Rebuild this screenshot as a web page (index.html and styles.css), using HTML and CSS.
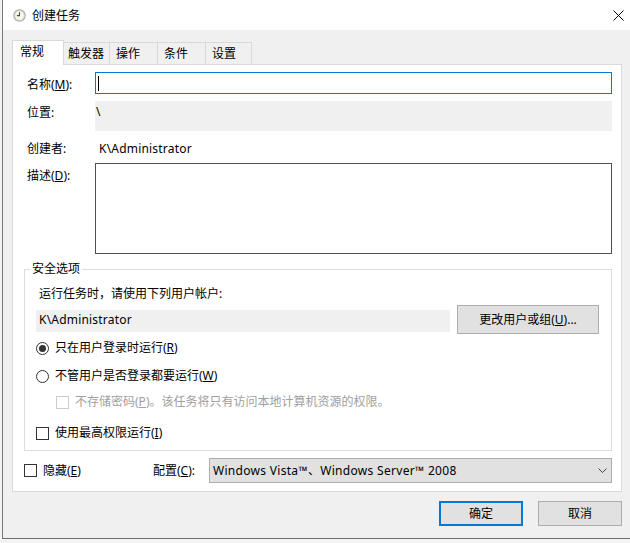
FILE: index.html
```html
<!DOCTYPE html>
<html lang="zh-CN">
<head>
<meta charset="utf-8">
<title>创建任务</title>
<link rel="stylesheet" href="styles.css">
</head>
<body>
<div class="screen">
  <div class="window">
    <div class="titlebar">
      <svg class="app-icon" width="13" height="13" viewBox="0 0 13 13">
        <circle cx="6.5" cy="6.5" r="6.2" fill="#a9a9a9"/>
        <circle cx="6.5" cy="6.5" r="5.2" fill="#d9d9d9"/>
        <circle cx="6.5" cy="6.5" r="4.3" fill="#fbf6e6"/>
        <path d="M6.5 3.3V6.6H3.9" stroke="#4a4a4a" stroke-width="1.1" fill="none"/>
      </svg>
      <span class="title">创建任务</span>
      <svg class="close" width="11" height="11" viewBox="0 0 11 11">
        <path d="M0.5 0.5L10.5 10.5M10.5 0.5L0.5 10.5" stroke="#000" stroke-width="1"/>
      </svg>
    </div>
    <div class="body">
      <div class="tabs">
        <div class="tab active">常规</div>
        <div class="tab t-trigger">触发器</div>
        <div class="tab t-wide">操作</div>
        <div class="tab t-wide">条件</div>
        <div class="tab t-set">设置</div>
      </div>
      <div class="panel">
        <div class="row row-name">
          <div class="label">名称(<u>M</u>):</div>
          <div class="input focused"><span class="caret"></span></div>
        </div>
        <div class="row row-loc">
          <div class="label">位置:</div>
          <div class="readonly">\</div>
        </div>
        <div class="row row-author">
          <div class="label">创建者:</div>
          <div class="value latin">K\Administrator</div>
        </div>
        <div class="row row-desc">
          <div class="label">描述(<u>D</u>):</div>
          <div class="textarea"></div>
        </div>
        <fieldset class="group">
          <legend>安全选项</legend>
          <div class="g-text">运行任务时，请使用下列用户帐户:</div>
          <div class="user-row">
            <div class="user-field latin">K\Administrator</div>
            <div class="btn change">更改用户或组(<u>U</u>)...</div>
          </div>
          <div class="opt opt-r1"><span class="radio checked"></span>只在用户登录时运行(<u>R</u>)</div>
          <div class="opt opt-r2"><span class="radio"></span>不管用户是否登录都要运行(<u>W</u>)</div>
          <div class="opt opt-dis"><span class="check disabled"></span>不存储密码(<u>P</u>)。该任务将只有访问本地计算机资源的权限。</div>
          <div class="opt opt-high"><span class="check"></span>使用最高权限运行(<u>I</u>)</div>
        </fieldset>
        <div class="bottom-row">
          <div class="hide-opt"><span class="check"></span>隐藏(<u>E</u>)</div>
          <div class="cfg-label">配置(<u>C</u>):</div>
          <div class="select">
            <span class="select-text latin">Windows Vista™、Windows Server™ 2008</span>
            <svg class="chevron" width="9" height="5" viewBox="0 0 9 5">
              <path d="M0.5 0.5L4.5 4.5L8.5 0.5" stroke="#444" stroke-width="1" fill="none"/>
            </svg>
          </div>
        </div>
      </div>
      <div class="buttons">
        <div class="btn dlg default">确定</div>
        <div class="btn dlg">取消</div>
      </div>
    </div>
  </div>
</div>
</body>
</html>
```
FILE: styles.css
```css
* { box-sizing: border-box; }
html, body { margin: 0; padding: 0; }
body {
  font-family: "Noto Sans", "Noto Sans CJK SC", sans-serif;
  font-size: 12px;
  color: #000;
  background: #f3f3f3;
}
u { text-decoration: underline; text-underline-offset: 1px; }
.latin { letter-spacing: 0.2px; }
.screen {
  width: 630px;
  height: 543px;
  background: #f3f3f3;
  overflow: hidden;
}
.window {
  margin-left: 2px;
  width: 628px;
  height: 539px;
  border-left: 1px solid #777;
  border-bottom: 1px solid #6e6e6e;
  background: #f0f0f0;
  display: flex;
  flex-direction: column;
}
.titlebar {
  height: 30px;
  background: #fff;
  display: flex;
  align-items: center;
  padding: 0 6px 0 10px;
}
.app-icon { display: block; }
.title {
  margin-left: 6px;
  line-height: 18px;
  font-family: "Noto Sans CJK SC", sans-serif;
}
.close { margin-left: auto; display: block; }

.body {
  padding: 10px 8px 0 9px;
}
.tabs {
  display: flex;
  align-items: flex-end;
  height: 24px;
}
.tab {
  height: 22px;
  line-height: 21px;
  background: #f0f0f0;
  border-top: 1px solid #d9d9d9;
  border-right: 1px solid #d9d9d9;
  padding-left: 6px;
  white-space: nowrap;
}
.tab.active {
  position: relative;
  z-index: 1;
  width: 52px;
  height: 25px;
  margin-bottom: -1px;
  background: #fff;
  border-left: 1px solid #d9d9d9;
  padding-left: 7px;
  padding-bottom: 3px;
}
.t-trigger { width: 46px; padding-left: 4px; }
.t-wide { width: 48px; }
.t-set { width: 46px; }

.panel {
  background: #fff;
  border: 1px solid #d9d9d9;
  padding: 7px 9px 8px 11px;
}
.row {
  display: grid;
  grid-template-columns: 71px 1fr;
  align-items: start;
}
.label {
  padding-left: 3px;
  line-height: 18px;
  white-space: nowrap;
}
.row-name .label { padding-top: 4px; }
.input {
  height: 22px;
  border: 1px solid #7a7a7a;
  background: #fff;
  position: relative;
}
.input.focused { border-color: #0078d7; }
.caret {
  position: absolute;
  left: 2px;
  top: 3px;
  width: 1px;
  height: 15px;
  background: #000;
}
.row-loc { margin-top: 7px; }
.row-loc .label { padding-top: 3px; }
.readonly {
  height: 30px;
  background: #f0f0f0;
  line-height: 18px;
  padding: 2px 0 0 1px;
}
.row-author { margin-top: 9px; }
.value { line-height: 18px; padding-left: 4px; }
.row-desc { margin-top: 5px; }
.row-desc .label { padding-top: 4px; }
.textarea {
  height: 91px;
  border: 1px solid #505050;
  background: #fff;
}

.group {
  margin: 6px 0 0 0;
  min-width: 0;
  border: 1px solid #dcdcdc;
  padding: 7px 12px 8px 11px;
}
.group legend {
  margin-left: -6px;
  padding: 0 2px;
  line-height: 18px;
}
.g-text { line-height: 18px; padding-left: 3px; }
.user-row {
  display: flex;
  align-items: flex-start;
  margin-top: 2px;
}
.user-field {
  width: 414px;
  height: 22px;
  margin-top: 5px;
  background: #f0f0f0;
  line-height: 20px;
  padding-left: 3px;
}
.btn {
  background: #e1e1e1;
  border: 1px solid #adadad;
  display: flex;
  align-items: center;
  justify-content: center;
  line-height: 18px;
  white-space: nowrap;
}
.change {
  margin-left: auto;
  width: 142px;
  height: 29px;
}
.opt {
  display: flex;
  align-items: center;
  height: 18px;
  line-height: 18px;
  white-space: nowrap;
}
.opt-r1 { margin-top: 5px; }
.opt-r2 { margin-top: 10px; }
.opt-dis { margin-top: 8px; padding-left: 20px; color: #a0a0a0; }
.opt-high { margin-top: 13px; }
.radio {
  width: 13px;
  height: 13px;
  border: 1px solid #333;
  border-radius: 50%;
  margin-right: 6px;
  display: flex;
  align-items: center;
  justify-content: center;
  flex: none;
}
.radio.checked::after {
  content: "";
  width: 7px;
  height: 7px;
  border-radius: 50%;
  background: #333;
}
.check {
  width: 13px;
  height: 13px;
  border: 1px solid #333;
  background: #fff;
  margin-right: 6px;
  flex: none;
}
.check.disabled { border-color: #cccccc; }

.bottom-row {
  display: flex;
  align-items: center;
  height: 25px;
  margin-top: 7px;
}
.hide-opt {
  width: 129px;
  display: flex;
  align-items: center;
  line-height: 18px;
}
.cfg-label { width: 56px; line-height: 18px; white-space: nowrap; }
.select {
  flex: 1;
  height: 25px;
  background: #e1e1e1;
  border: 1px solid #adadad;
  display: flex;
  align-items: center;
  padding: 0 4px 0 3px;
}
.select-text { line-height: 18px; white-space: nowrap; letter-spacing: 0.3px; }
.chevron { margin-left: auto; display: block; }

.buttons {
  display: flex;
  justify-content: flex-end;
  gap: 15px;
  margin-top: 9px;
}
.dlg { width: 84px; height: 25px; }
.dlg.default { border: 2px solid #0078d7; }
```
